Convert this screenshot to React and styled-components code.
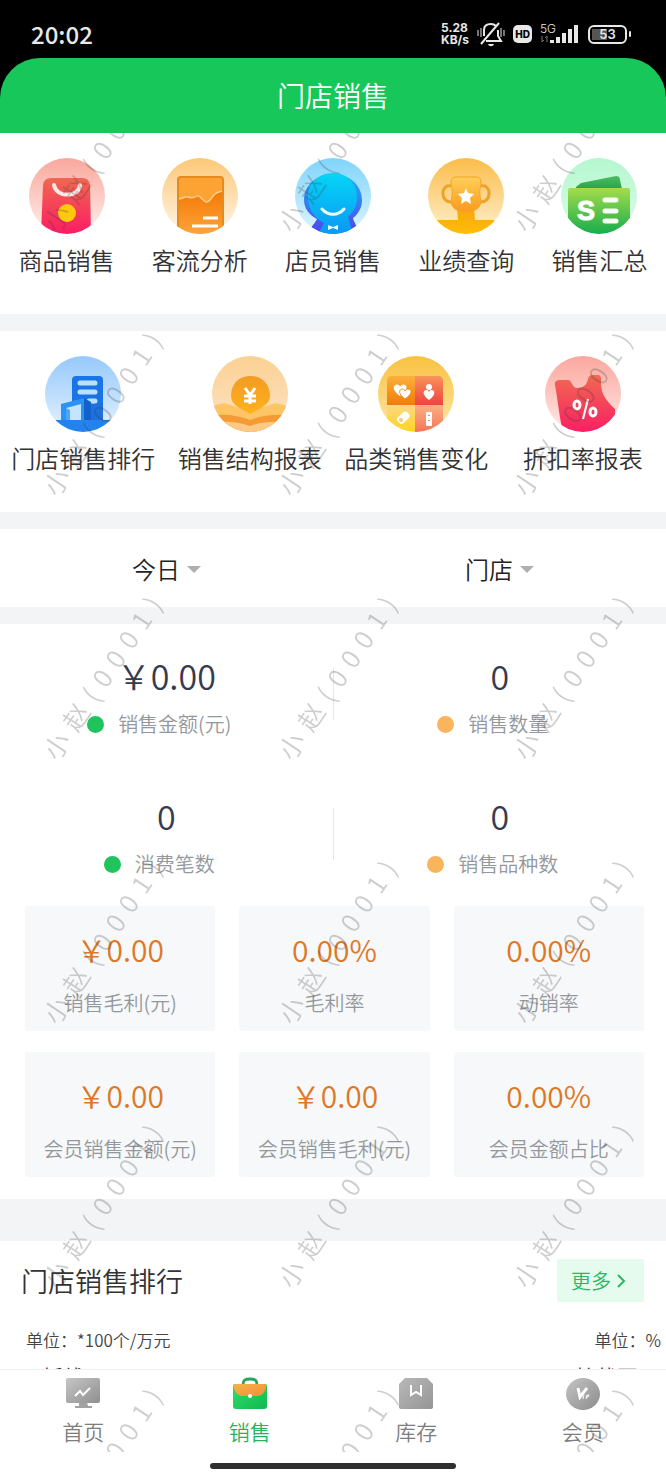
import React from 'react'
import styled, { createGlobalStyle } from 'styled-components'

const GlobalStyle = createGlobalStyle`
  * { box-sizing: border-box; }
  body {
    margin: 0;
    background: #fff;
    color: #333;
    font-family: "Noto Sans CJK SC", "Noto Sans", sans-serif;
    font-weight: 350;
    -webkit-font-smoothing: antialiased;
  }
  button, select {
    margin: 0;
    padding: 0;
    border: 0;
    background: none;
    color: inherit;
    font: inherit;
    cursor: pointer;
  }
  a { color: inherit; text-decoration: none; }
`

const Page = styled.div`
  position: relative;
  display: flex;
  flex-direction: column;
  height: 100vh;
  overflow: hidden;
`

/* ---------- status bar ---------- */

const StatusBar = styled.div`
  display: flex;
  flex: none;
  align-items: center;
  justify-content: space-between;
  height: 58px;
  padding: 10px 35px 0 31px;
  background: #000;
  color: #e8e8e8;
`

const Clock = styled.time`
  font-size: 24px;
  font-weight: 500;
  line-height: 28px;
`

const StatusIcons = styled.div`
  display: flex;
  align-items: center;
  gap: 8px;
`

const NetSpeed = styled.div`
  display: grid;
  font-family: Inter, sans-serif;
  font-size: 12px;
  font-weight: 700;
  line-height: 12px;
`

const HdBadge = styled.span`
  width: 19px;
  border-radius: 5px;
  background: #e8e8e8;
  color: #000;
  font-family: Inter, sans-serif;
  font-size: 10px;
  font-weight: 800;
  line-height: 18px;
  text-align: center;
`

const Battery = styled.div`
  display: flex;
  align-items: center;
  gap: 2px;

  &::after {
    content: '';
    width: 2px;
    height: 6px;
    border-radius: 1px;
    background: #e8e8e8;
  }
`

const BatteryLevel = styled.span`
  width: 39px;
  border: 2px solid #e8e8e8;
  border-radius: 6px;
  background: linear-gradient(90deg, #555 50%, #000 50%) 2px 2px / 31px 11px no-repeat;
  font-family: Inter, sans-serif;
  font-size: 13px;
  font-weight: 600;
  line-height: 15px;
  text-align: center;
`

/* ---------- header ---------- */

const HeaderWrap = styled.header`
  flex: none;
  background: #000;
`

const Title = styled.h1`
  margin: 0;
  padding: 17px 0 18px;
  border-radius: 40px 40px 0 0;
  background: #18c759;
  color: #fff;
  font-size: 28px;
  font-weight: 350;
  line-height: 40px;
  text-align: center;
`

/* ---------- content ---------- */

const Content = styled.main`
  flex: 1;
  min-height: 0;
  overflow-y: auto;
  scrollbar-width: none;
  background: #f3f4f6;
`

const Panel = styled.section`
  margin-bottom: ${props => props.$gap || 17}px;
  background: #fff;
`

const Menu = styled.nav`
  display: grid;
  grid-template-columns: repeat(${props => props.$cols}, 1fr);
  padding: 25px 0 36px;
`

const MenuLink = styled.a`
  display: flex;
  flex-direction: column;
  align-items: center;
  gap: 8px;
  font-size: 24px;
  line-height: 36px;
  white-space: nowrap;

  svg {
    width: 76px;
    height: 76px;
  }
`

const Filters = styled.div`
  display: grid;
  grid-template-columns: 1fr 1fr;
  padding: 22px 0 20px;
`

const Filter = styled.label`
  display: flex;
  align-items: center;
  justify-content: center;
  gap: 7px;

  &::after {
    content: '';
    border: 7px solid transparent;
    border-top-color: #adb0b3;
    border-bottom: 0;
  }

  select {
    appearance: none;
    color: #222;
    font-size: 24px;
    line-height: 36px;
  }
`

const Stats = styled.div`
  display: grid;
  grid-template-columns: 1fr 1px 1fr;
`

const Stat = styled.div`
  padding: 32px 0 25px;
  text-align: center;
`

const StatValue = styled.div`
  color: #363b50;
  font-size: 34px;
  line-height: 40px;
`

const StatLabel = styled.div`
  display: flex;
  align-items: center;
  justify-content: center;
  gap: 14px;
  margin-top: 13px;
  padding-right: 14px;
  color: #94989c;
  font-size: 20px;
  line-height: 30px;

  &::before {
    content: '';
    width: 17px;
    height: 17px;
    border-radius: 50%;
    background: ${props => props.$dot};
  }
`

const Divider = styled.div`
  height: 52px;
  margin-top: 44px;
  background: #e4e6e8;
`

const Cards = styled.div`
  display: grid;
  grid-template-columns: repeat(3, 1fr);
  gap: 21px 24px;
  padding: 2px 22px 22px 25px;
`

const Card = styled.div`
  padding: 23px 0 13px;
  border-radius: 3px;
  background: #f6f8fa;
  text-align: center;
  white-space: nowrap;
`

const CardValue = styled.div`
  color: #dd7826;
  font-size: 30px;
  line-height: 40px;
`

const CardLabel = styled.div`
  margin-top: 19px;
  color: #94989c;
  font-size: 20px;
  line-height: 30px;
`

const RankHead = styled.div`
  display: flex;
  align-items: center;
  justify-content: space-between;
  padding: 18px 22px 0 21px;

  h2 {
    margin: 0;
    font-size: 27px;
    font-weight: 350;
    line-height: 40px;
  }
`

const MoreButton = styled.button`
  display: flex;
  align-items: center;
  gap: 6px;
  padding: 0 18px 0 14px;
  border-radius: 2px;
  background: #e5fbed;
  color: #2cb566;
  font-size: 20px;
  line-height: 43px;
`

const Units = styled.div`
  display: flex;
  justify-content: space-between;
  padding: 26px 5px 0 26px;
  color: #444;
  font-size: 17px;
  line-height: 24px;
`

const ChartNames = styled.div`
  display: flex;
  justify-content: space-between;
  padding: 9px 28px 0 42px;
  font-size: 21px;
  line-height: 30px;
`

/* ---------- bottom tabs ---------- */

const TabBar = styled.footer`
  flex: none;
  padding-bottom: 10px;
  border-top: 1px solid #f0f0f0;
  background: #fff;
`

const Tabs = styled.nav`
  display: grid;
  grid-template-columns: repeat(4, 1fr);
  padding: 6px 0 18px;
`

const Tab = styled.a`
  display: flex;
  flex-direction: column;
  align-items: center;
  gap: 7px;
  color: ${props => (props.$active ? '#22b45d' : '#7d7d7d')};
  font-size: 21px;
  line-height: 28px;

  svg {
    width: 36px;
    height: 34px;
  }
`

const HomeIndicator = styled.div`
  width: 37%;
  height: 6px;
  margin: 0 auto;
  border-radius: 3px;
  background: #303030;
`

/* ---------- watermark ---------- */

const Watermark = styled.div`
  position: absolute;
  inset: 133px 0 27px;
  overflow: hidden;
  pointer-events: none;
`

const WatermarkGrid = styled.div`
  display: grid;
  grid-template-columns: repeat(auto-fill, 235px);
  grid-auto-rows: 264px;
  width: calc(100% + 60px);
  margin: -116px 0 0 -17px;
`

const Mark = styled.div`
  display: flex;
  align-items: center;
  justify-content: center;
  gap: 9px;
  transform: rotate(-56deg);
  color: rgba(60, 60, 60, 0.25);
  font-size: 26px;
`

/* ---------- drawings ---------- */

function Gradient({ id, from, to, diagonal }) {
  return (
    <linearGradient id={id} x1="0" y1="0" x2={diagonal ? 1 : 0} y2="1">
      <stop offset="0" stopColor={from} />
      <stop offset="1" stopColor={to} />
    </linearGradient>
  )
}

// every menu icon sits on a round backdrop that also clips its bottom
function RoundIcon({ id, from, to, children }) {
  return (
    <svg viewBox="0 0 76 76" aria-hidden="true">
      <defs>
        <Gradient id={`${id}-bg`} from={from} to={to} />
        <clipPath id={`${id}-clip`}><circle cx="38" cy="38" r="38" /></clipPath>
      </defs>
      <g clipPath={`url(#${id}-clip)`}>
        <rect width="76" height="76" fill={`url(#${id}-bg)`} />
        {children}
      </g>
    </svg>
  )
}

const GoodsIcon = () => (
  <RoundIcon id="goods" from="#f9a79c" to="#fff0ec">
    <defs><Gradient id="goods-a" from="#f0684f" to="#fb1d63" /></defs>
    <path d="M22 20h31q7 0 8 7l1 49H12l2-49q1-7 8-7z" fill="url(#goods-a)" />
    <path d="M25 27c2 13 25 13 26 0" fill="none" stroke="#ffe9e6" strokeWidth="4" strokeLinecap="round" />
    <circle cx="38" cy="55" r="9" fill="#ffc90d" />
  </RoundIcon>
)

const FlowIcon = () => (
  <RoundIcon id="flow" from="#fcc878" to="#fff5e6">
    <defs><Gradient id="flow-a" from="#f57906" to="#fda43a" /></defs>
    <rect x="16" y="19" width="45" height="62" rx="3" fill="#fda334" stroke="#e58a1c" strokeWidth="2" />
    <path d="M17 41c5-1 6-3 9-2s6 1 9-1 5 5 9 6 6-6 9-8 4-2 7-3v43H17z" fill="url(#flow-a)" />
    <path d="M17 41c5-1 6-3 9-2s6 1 9-1 5 5 9 6 6-6 9-8 4-2 7-3" fill="none" stroke="#ffd08a" strokeWidth="1.5" />
    <path d="M41 60h15M30 68h26" stroke="#fff" strokeWidth="3" />
  </RoundIcon>
)

const ClerkIcon = () => (
  <RoundIcon id="clerk" from="#7fd4fb" to="#dff5fe">
    <defs>
      <Gradient id="clerk-a" from="#05d5f6" to="#0b98f4" />
      <Gradient id="clerk-b" from="#1db4f7" to="#5142ec" />
    </defs>
    <path d="M38 16C55 16 67 28 67 42c0 8-4 14-9 18 1 5 4 6 5 16H13c2-7 6-9 9-15C14 57 9 50 9 42 9 28 21 16 38 16z" fill="url(#clerk-b)" />
    <path d="M38 15c15 0 24 11 24 25 0 9-4 14-9 19l5 17H23l6-11c-9-5-16-13-16-25 0-14 10-25 25-25z" fill="url(#clerk-a)" />
    <path d="M27 51c6 7 16 7 22 0" fill="none" stroke="#eaffff" strokeWidth="3" strokeLinecap="round" />
    <path d="M33 67l5 2 5-2v5l-5-2-5 2z" fill="#e8fbff" />
  </RoundIcon>
)

const TrophyIcon = () => (
  <RoundIcon id="trophy" from="#fbbd4b" to="#fff0cf">
    <defs>
      <Gradient id="trophy-a" from="#ffcf58" to="#fb9a1c" />
      <Gradient id="trophy-b" from="#f8a610" to="#ffbd08" />
    </defs>
    <path d="M23 28c-11-2-11 17 1 16M53 28c11-2 11 17-1 16" fill="none" stroke="#efa326" strokeWidth="3" />
    <path d="M29 50h17l1 12h19v14H9V62h21z" fill="url(#trophy-b)" />
    <path d="M28 19h20q5 0 5 5c0 6-2 7-1 13 0 4 2 6 0 10-3 9-25 9-28 0-2-4 0-6 0-10 1-6-1-7-1-13q0-5 5-5z" fill="url(#trophy-a)" stroke="#f2a32a" />
    <path d="M38 30l2 5 6 1-4 4 1 6-5-3-5 3 1-6-4-4 6-1z" fill="#fff" />
  </RoundIcon>
)

const SummaryIcon = () => (
  <RoundIcon id="summary" from="#b5f7cf" to="#ddfbe8">
    <defs>
      <Gradient id="summary-a" from="#a4dc4b" to="#16ad4d" />
      <Gradient id="summary-b" from="#4dbe5f" to="#27a14c" />
    </defs>
    <path d="M15 29l5-4 35-7q4 0 4 4l2 9H15z" fill="url(#summary-b)" />
    <path d="M9 30h58q2 0 2 3v43H7V33q0-3 2-3z" fill="url(#summary-a)" />
    <text x="25" y="62" fill="#fff" stroke="#fff" fontFamily="Liberation Sans" fontSize="27" fontWeight="700" textAnchor="middle">S</text>
    <path d="M44 42h11M44 53h11M44 63h11" stroke="#f7fff4" strokeWidth="5" strokeLinecap="round" />
  </RoundIcon>
)

const StoreRankIcon = () => (
  <RoundIcon id="store" from="#97c9fb" to="#e3f2ff">
    <defs><Gradient id="store-a" from="#1976e8" to="#1e6fdc" /></defs>
    <rect x="27" y="20" width="31" height="50" rx="4" fill="url(#store-a)" />
    <path d="M35 27h15M35 36h15M44 45h6" stroke="#b9e1ff" strokeWidth="5" strokeLinecap="round" />
    <path d="M39 42l7 4v19h-7z" fill="#1362c9" />
    <path d="M16 48l23-6v22H16z" fill="#2c92f5" />
    <path d="M21 52l15-4v17H21z" fill="#c3e5ff" />
    <path d="M21 52l4 2v11h-4z" fill="#4ba7fa" />
    <path d="M0 64h76v12H0z" fill="#2382ee" />
  </RoundIcon>
)

const StructureIcon = () => (
  <RoundIcon id="structure" from="#fbd193" to="#fde3c8">
    <defs><Gradient id="structure-a" from="#f39b24" to="#ffb21c" /></defs>
    <path d="M0 50l12-3c10 3 20 5 26 11 6-6 16-8 26-11l12 3v26H0z" fill="#fdc566" />
    <path d="M38 20c12 0 20 8 20 20 0 9-10 12-20 18-10-6-19-9-19-18 0-12 8-20 19-20z" fill="url(#structure-a)" />
    <path d="M0 59c16-1 28 1 38 5 10-4 22-6 38-5v17H0z" fill="#f49b35" />
    <path d="M0 66c16-1 28 0 38 4 10-4 22-5 38-4v10H0z" fill="#fdc987" />
    <path d="M33 32l5 7 5-7M32 40h12M32 45h12M38 39v9" fill="none" stroke="#fff" strokeWidth="3" />
  </RoundIcon>
)

const CategoryIcon = () => (
  <RoundIcon id="category" from="#f9c13f" to="#fde8a8">
    <defs>
      <Gradient id="category-a" from="#fbb03b" to="#f07c0a" />
      <Gradient id="category-b" from="#f8945a" to="#ef4340" />
      <Gradient id="category-c" from="#fcd783" to="#ffd51f" />
      <Gradient id="category-d" from="#f9b183" to="#f97358" />
    </defs>
    <path d="M14 20h23v29H9V25q0-5 5-5z" fill="url(#category-a)" />
    <path d="M37 20h23q5 0 5 5v24H37z" fill="url(#category-b)" />
    <path d="M9 49h28v27H9z" fill="url(#category-c)" />
    <path d="M37 49h28v27H37z" fill="url(#category-d)" />
    <path d="M22 40c-13-9-2-15 0-9 3-6 13 0 0 9z" fill="#fff" />
    <path d="M27 43c-11-8-2-13 0-8 3-5 12 0 0 8z" fill="#fff" stroke="#ee8a1e" />
    <circle cx="51" cy="31" r="3" fill="#fff" />
    <path d="M51 44c-11-8-2-13 0-8 2-5 11 0 0 8z" fill="#fff" />
    <rect x="19" y="58" width="13" height="8" rx="3" fill="#fff" transform="rotate(-42 25 62)" />
    <circle cx="23" cy="64" r="2" fill="#f7cd70" />
    <rect x="48" y="56" width="6" height="14" rx="1" fill="#fff" />
    <path d="M51 59v1M51 64v1" stroke="#f47b5b" strokeWidth="2" />
  </RoundIcon>
)

const DiscountIcon = () => (
  <RoundIcon id="discount" from="#fba79e" to="#ffe9e6">
    <defs><Gradient id="discount-a" from="#f16950" to="#f91f64" /></defs>
    <path d="M14 24h9c4 0 4 8 9 8 6 0 10-3 11-9 1-5 5-4 9-4 5 0 4 4 4 8 0 12 6 18 14 26v23H18C14 60 13 45 10 29q-1-4 4-5z" fill="url(#discount-a)" />
    <g fill="none" stroke="#fff" strokeWidth="3">
      <ellipse cx="32" cy="49" rx="3" ry="4" />
      <ellipse cx="48" cy="56" rx="3" ry="4" />
      <path d="M43 43l-5 20" strokeWidth="2" />
    </g>
  </RoundIcon>
)

const MuteIcon = () => (
  <svg width="28" height="26" viewBox="0 0 28 26" fill="none" stroke="#e8e8e8" strokeWidth="2" aria-hidden="true">
    <path d="M7 15V9c0-5 4-6 7-6s4 1 5 2M21 9v6l3 5H9M4 23L22 2" />
    <path d="M11 23c1 3 5 3 6 0z" fill="#e8e8e8" stroke="none" />
    <path d="M1 9v6M4 7v9M24 7v9M27 9v6" strokeWidth="1" />
  </svg>
)

const SignalIcon = () => (
  <svg width="40" height="28" viewBox="0 0 40 28" aria-hidden="true">
    <text x="0" y="13" fill="#e8e8e8" fontFamily="Inter" fontSize="12">5G</text>
    <path d="M2 16v6M4 20l-2 2M7 16v6M7 16l-2 2" stroke="#777" fill="none" />
    <path d="M12 23v-3M18 23v-6M24 23V13M30 23V9M36 23V5" stroke="#e8e8e8" strokeWidth="4" />
  </svg>
)

const MoreArrow = () => (
  <svg width="9" height="14" viewBox="0 0 9 14" fill="none" stroke="currentColor" strokeWidth="2" aria-hidden="true">
    <path d="M1 1l6 6-6 6" />
  </svg>
)

const HomeIcon = () => (
  <svg viewBox="0 0 36 34" aria-hidden="true">
    <defs><Gradient id="tab-home" from="#c6c6c6" to="#8f8f8f" diagonal /></defs>
    <path d="M14 26h8l1 4h4v2H10v-2h4z" fill="#a2a2a2" />
    <rect x="1" y="2" width="34" height="25" rx="2" fill="url(#tab-home)" />
    <path d="M10 20l5-5 3 4 7-7" fill="none" stroke="#fff" strokeWidth="2" />
  </svg>
)

const SalesIcon = () => (
  <svg viewBox="0 0 36 34" aria-hidden="true">
    <defs>
      <Gradient id="tab-sales" from="#28e36b" to="#16b64e" diagonal />
      <Gradient id="tab-flap" from="#f8b344" to="#f08d3f" diagonal />
    </defs>
    <path d="M11 9c0-5 2-6 7-6s7 1 7 6" fill="none" stroke="#2aa65b" strokeWidth="3" />
    <path d="M1 10q0-2 2-2h30q2 0 2 2v20q0 3-3 3H4q-3 0-3-3z" fill="url(#tab-sales)" />
    <path d="M4 8h28q3 0 2 4c-1 4-4 8-8 8H10C6 20 3 16 2 12q-1-4 2-4z" fill="url(#tab-flap)" />
    <circle cx="18" cy="20" r="2" fill="#fff" />
  </svg>
)

const StockIcon = () => (
  <svg viewBox="0 0 36 34" aria-hidden="true">
    <defs><Gradient id="tab-stock" from="#b9b9b9" to="#959595" diagonal /></defs>
    <path d="M7 2h22l6 6v23q0 2-3 2H4q-3 0-3-2V8z" fill="url(#tab-stock)" />
    <path d="M13 9v10l5-3 5 3V9" fill="none" stroke="#fff" strokeWidth="2" />
  </svg>
)

const MemberIcon = () => (
  <svg viewBox="0 0 36 34" aria-hidden="true">
    <defs><Gradient id="tab-member" from="#c4c4c4" to="#8c8c8c" diagonal /></defs>
    <ellipse cx="18" cy="18" rx="17" ry="16" fill="url(#tab-member)" />
    <path d="M13 12l2 9 7-9" fill="none" stroke="#fff" strokeWidth="3" />
    <path d="M19 19l-1 4M21 23l1-4h2l-1 2h-2" fill="none" stroke="#fff" />
  </svg>
)

/* ---------- data ---------- */

const salesMenu = [
  { name: '商品销售', icon: <GoodsIcon /> },
  { name: '客流分析', icon: <FlowIcon /> },
  { name: '店员销售', icon: <ClerkIcon /> },
  { name: '业绩查询', icon: <TrophyIcon /> },
  { name: '销售汇总', icon: <SummaryIcon /> },
]

const reportMenu = [
  { name: '门店销售排行', icon: <StoreRankIcon /> },
  { name: '销售结构报表', icon: <StructureIcon /> },
  { name: '品类销售变化', icon: <CategoryIcon /> },
  { name: '折扣率报表', icon: <DiscountIcon /> },
]

const stats = [
  [{ label: '销售金额(元)', value: '￥0.00' }, { label: '销售数量', value: '0' }],
  [{ label: '消费笔数', value: '0' }, { label: '销售品种数', value: '0' }],
]

const cards = [
  { label: '销售毛利(元)', value: '￥0.00' },
  { label: '毛利率', value: '0.00%' },
  { label: '动销率', value: '0.00%' },
  { label: '会员销售金额(元)', value: '￥0.00' },
  { label: '会员销售毛利(元)', value: '￥0.00' },
  { label: '会员金额占比', value: '0.00%' },
]

const tabs = [
  { name: '首页', icon: <HomeIcon /> },
  { name: '销售', icon: <SalesIcon />, active: true },
  { name: '库存', icon: <StockIcon /> },
  { name: '会员', icon: <MemberIcon /> },
]

function IconMenu({ items }) {
  return (
    <Menu $cols={items.length}>
      {items.map(item => (
        <MenuLink href="#" key={item.name}>
          {item.icon}
          <span>{item.name}</span>
        </MenuLink>
      ))}
    </Menu>
  )
}

function StatCell({ stat, dot }) {
  return (
    <Stat>
      <StatValue>{stat.value}</StatValue>
      <StatLabel $dot={dot}>{stat.label}</StatLabel>
    </Stat>
  )
}

export default function App() {
  return (
    <Page>
      <GlobalStyle />

      <StatusBar>
        <Clock>20:02</Clock>
        <StatusIcons>
          <NetSpeed>
            <span>5.28</span>
            <span>KB/s</span>
          </NetSpeed>
          <MuteIcon />
          <HdBadge>HD</HdBadge>
          <SignalIcon />
          <Battery><BatteryLevel>53</BatteryLevel></Battery>
        </StatusIcons>
      </StatusBar>

      <HeaderWrap>
        <Title>门店销售</Title>
      </HeaderWrap>

      <Content>
        <Panel>
          <IconMenu items={salesMenu} />
        </Panel>

        <Panel>
          <IconMenu items={reportMenu} />
        </Panel>

        <Panel>
          <Filters>
            <Filter>
              <select aria-label="日期"><option>今日</option></select>
            </Filter>
            <Filter>
              <select aria-label="范围"><option>门店</option></select>
            </Filter>
          </Filters>
        </Panel>

        <Panel $gap={42}>
          <Stats>
            {stats.map(([left, right]) => (
              <React.Fragment key={left.label}>
                <StatCell stat={left} dot="#1fc45c" />
                <Divider />
                <StatCell stat={right} dot="#f8b55c" />
              </React.Fragment>
            ))}
          </Stats>
          <Cards>
            {cards.map(card => (
              <Card key={card.label}>
                <CardValue>{card.value}</CardValue>
                <CardLabel>{card.label}</CardLabel>
              </Card>
            ))}
          </Cards>
        </Panel>

        <Panel>
          <RankHead>
            <h2>门店销售排行</h2>
            <MoreButton type="button">更多<MoreArrow /></MoreButton>
          </RankHead>
          <Units>
            <span>单位：*100个/万元</span>
            <span>单位：%</span>
          </Units>
          <ChartNames>
            <span>折线</span>
            <span>柱状图</span>
          </ChartNames>
        </Panel>
      </Content>

      <TabBar>
        <Tabs>
          {tabs.map(tab => (
            <Tab href="#" key={tab.name} $active={tab.active}>
              {tab.icon}
              <span>{tab.name}</span>
            </Tab>
          ))}
        </Tabs>
        <HomeIndicator />
      </TabBar>

      <Watermark aria-hidden="true">
        <WatermarkGrid>
          {Array.from({ length: 18 }, (_, i) => (
            <Mark key={i}>
              {[...'小赵(0001)'].map((char, j) => <span key={j}>{char}</span>)}
            </Mark>
          ))}
        </WatermarkGrid>
      </Watermark>
    </Page>
  )
}
